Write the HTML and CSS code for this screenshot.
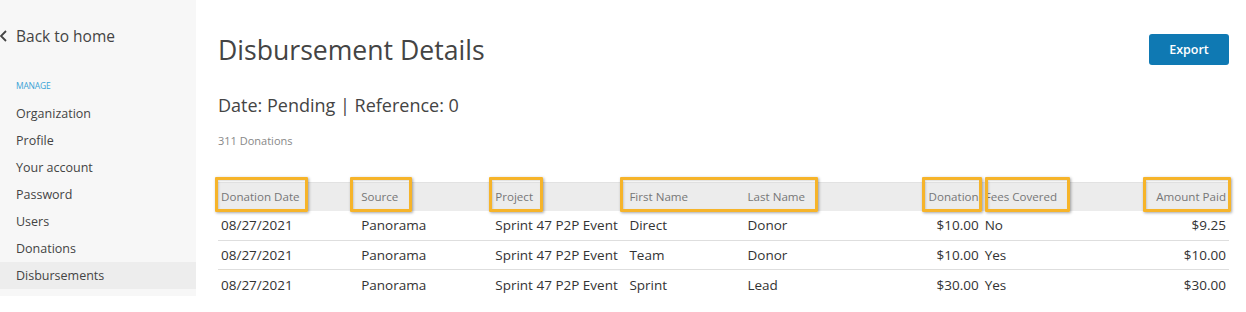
FILE: index.html
```html
<!DOCTYPE html>
<html lang="en">

<head>
    <meta charset="UTF-8">
    <meta name="viewport" content="width=device-width, initial-scale=1.0">
    <title>Disbursement Details</title>
    <link rel="stylesheet" href="styles.css">
</head>

<body>
    <div class="page">
        <aside class="sidebar">
            <a class="back" href="#">
                <svg width="9" height="12" viewBox="0 0 9 12"><polyline points="7,1 2,6 7,11" fill="none" stroke="#444" stroke-width="1.8" /></svg>
                <span>Back to home</span>
            </a>
            <div class="nav-label">Manage</div>
            <nav class="nav">
                <a href="#">Organization</a>
                <a href="#">Profile</a>
                <a href="#">Your account</a>
                <a href="#">Password</a>
                <a href="#">Users</a>
                <a href="#">Donations</a>
                <a href="#" class="active">Disbursements</a>
            </nav>
        </aside>

        <main class="content">
            <div class="title-row">
                <h1>Disbursement Details</h1>
                <button class="export">Export</button>
            </div>
            <h2 class="meta">Date: Pending | Reference: 0</h2>
            <p class="count">311 Donations</p>

            <div class="table-wrap">
                <table class="donations">
                    <colgroup>
                        <col style="width:140px">
                        <col style="width:134px">
                        <col style="width:134px">
                        <col style="width:118px">
                        <col style="width:136px">
                        <col style="width:101px">
                        <col style="width:129px">
                        <col style="width:118px">
                    </colgroup>
                    <thead>
                        <tr>
                            <th>Donation Date</th>
                            <th>Source</th>
                            <th>Project</th>
                            <th>First Name</th>
                            <th>Last Name</th>
                            <th class="num">Donation</th>
                            <th>Fees Covered</th>
                            <th class="num">Amount Paid</th>
                        </tr>
                    </thead>
                    <tbody>
                        <tr>
                            <td>08/27/2021</td>
                            <td>Panorama</td>
                            <td>Sprint 47 P2P Event</td>
                            <td>Direct</td>
                            <td>Donor</td>
                            <td class="num">$10.00</td>
                            <td>No</td>
                            <td class="num">$9.25</td>
                        </tr>
                        <tr>
                            <td>08/27/2021</td>
                            <td>Panorama</td>
                            <td>Sprint 47 P2P Event</td>
                            <td>Team</td>
                            <td>Donor</td>
                            <td class="num">$10.00</td>
                            <td>Yes</td>
                            <td class="num">$10.00</td>
                        </tr>
                        <tr>
                            <td>08/27/2021</td>
                            <td>Panorama</td>
                            <td>Sprint 47 P2P Event</td>
                            <td>Sprint</td>
                            <td>Lead</td>
                            <td class="num">$30.00</td>
                            <td>Yes</td>
                            <td class="num">$30.00</td>
                        </tr>
                    </tbody>
                </table>

                <!-- highlight annotations over the header -->
                <div class="mark m-date"></div>
                <div class="mark m-source"></div>
                <div class="mark m-project"></div>
                <div class="mark m-name"></div>
                <div class="mark m-donation"></div>
                <div class="mark m-fees"></div>
                <div class="mark m-amount"></div>
            </div>
        </main>
    </div>
</body>

</html>
```

FILE: styles.css
```css
:root {
    --text: #444;
    --dark-text: #333;
    --muted: #888;
    --side-bg: #f7f7f7;
    --active-bg: #ededed;
    --blue: #0f79b3;
    --accent: #3aa3d6;
    --mark: #f6b42a;
    --line: #dedede;
}

* {
    box-sizing: border-box;
    margin: 0;
    padding: 0;
    font-family: 'Open Sans', sans-serif;
}

body {
    background-color: #fff;
    color: var(--text);
}

a {
    text-decoration: none;
    color: inherit;
}

.page {
    display: flex;
    align-items: flex-start;
}

.sidebar {
    width: 196px;
    flex: none;
    background-color: var(--side-bg);
    padding: 25px 0 7px;
}

.back {
    display: flex;
    align-items: center;
    gap: 8px;
    height: 22px;
    font-size: 15.5px;
    color: var(--text);
}

.back svg {
    display: block;
    margin-left: -1px;
}

.nav-label {
    margin: 33px 0 0 16px;
    height: 20px;
    font-size: 8.5px;
    text-transform: uppercase;
    letter-spacing: -0.2px;
    color: var(--accent);
    line-height: 12px;
}

.nav {
    display: flex;
    flex-direction: column;
}

.nav a {
    display: block;
    height: 27px;
    line-height: 27px;
    padding-left: 16px;
    font-size: 12.5px;
    color: var(--text);
}

.nav a.active {
    background-color: var(--active-bg);
}

.content {
    flex: 1 1 0%;
    padding: 32px 17px 0 22px;
}

.title-row {
    display: flex;
    justify-content: space-between;
    align-items: center;
    height: 36px;
}

.title-row h1 {
    font-size: 26.6px;
    font-weight: 400;
    color: var(--text);
    line-height: 36px;
}

.export {
    appearance: none;
    border: none;
    outline: none;
    width: 80px;
    height: 31px;
    border-radius: 3px;
    background-color: var(--blue);
    color: #fff;
    font-size: 12.5px;
    font-weight: 600;
    cursor: pointer;
    margin-top: -1px;
}

.meta {
    margin-top: 25px;
    font-size: 18px;
    font-weight: 400;
    line-height: 24px;
    color: var(--text);
}

.count {
    margin-top: 16px;
    font-size: 11px;
    line-height: 16px;
    color: var(--muted);
}

.table-wrap {
    position: relative;
    margin-top: 33px;
}

.donations {
    width: 1011px;
    border-collapse: collapse;
    table-layout: fixed;
}

.donations th {
    background-color: #ececec;
    border-top: 1px solid #e2e2e2;
    height: 28px;
    padding: 0 3px;
    font-size: 11.6px;
    font-weight: 400;
    color: #777;
    text-align: left;
    white-space: nowrap;
}

.donations td {
    height: 29.5px;
    padding: 0 3px;
    font-size: 13.5px;
    color: var(--dark-text);
    white-space: nowrap;
}

.donations tbody tr+tr td {
    border-top: 1px solid var(--line);
}

.donations .num {
    text-align: right;
}

.mark {
    position: absolute;
    top: -5px;
    height: 35px;
    border: 3px solid var(--mark);
    border-radius: 1px;
    box-shadow: 1px 1px 3px rgba(0, 0, 0, 0.35), inset 1px 1px 2px rgba(0, 0, 0, 0.15);
}

.m-date { left: -3px; width: 93px; }
.m-source { left: 132px; width: 62px; }
.m-project { left: 271px; width: 54px; }
.m-name { left: 402px; width: 198px; }
.m-donation { left: 704px; width: 60px; }
.m-fees { left: 767px; width: 85px; }
.m-amount { left: 925px; width: 88px; }
```
